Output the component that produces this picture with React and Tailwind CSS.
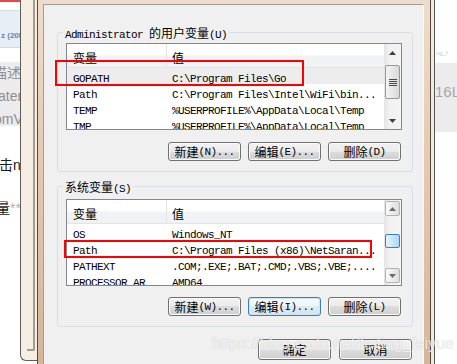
import React from "react";

const CJK = /([\u3400-\u9fff]+)/;

// ASCII runs in a narrow mono face (6px advance), CJK runs at 12px
function Txt({ children }) {
  const parts = String(children).split(CJK);
  return parts.map((p, i) => {
    if (p === "") return null;
    if (CJK.test(p)) {
      return (
        <span key={i} className="font-['Noto_Sans_CJK_SC',sans-serif] text-[12px]">
          {p}
        </span>
      );
    }
    return (
      <span key={i} className="font-['Liberation_Mono',monospace] text-[11px] tracking-[-0.6px] whitespace-pre">
        {p}
      </span>
    );
  });
}

function Arrow({ down, color = "#3f3f3f" }) {
  return (
    <svg width="7" height="4" viewBox="0 0 7 4">
      <polygon points={down ? "0,0 7,0 3.5,4" : "0,4 7,4 3.5,0"} fill={color} />
    </svg>
  );
}

function ScrollBar({ hot }) {
  return (
    <div className="w-[17px] flex flex-col bg-[linear-gradient(90deg,#e4e4e4,#f2f2f2_35%,#f4f4f4)]">
      {hot ? (
        <div className="h-[17px] pt-[1px] px-[1px]">
          <div className="h-[15px] rounded-[2px] border border-[#b2b2b2] bg-[linear-gradient(90deg,#fafafa,#dedede)] flex items-center justify-center">
            <Arrow color="#6a6a6a" />
          </div>
        </div>
      ) : (
        <div className="h-[17px] flex items-center justify-center">
          <Arrow />
        </div>
      )}
      <div className="flex-1 px-[1px]">
        {hot ? (
          <div className="mt-[17px] h-[14px] rounded-[2px] border border-[#3c7fb1] bg-[linear-gradient(90deg,#e6f5fd,#a8d9f4)]" />
        ) : (
          <div className="mt-[4px] h-[34px] rounded-[2px] border border-[#979797] bg-[linear-gradient(90deg,#f4f4f4,#d9d9d9)] flex flex-col items-center justify-center gap-[1px]">
            <div className="w-[8px] h-[1px] bg-[#4a4a4a]" />
            <div className="w-[8px] h-[1px] bg-[#4a4a4a]" />
            <div className="w-[8px] h-[1px] bg-[#4a4a4a]" />
            <div className="w-[8px] h-[1px] bg-[#4a4a4a]" />
          </div>
        )}
      </div>
      {hot ? (
        <div className="h-[17px] pb-[1px] px-[1px]">
          <div className="h-[15px] rounded-[2px] border border-[#b2b2b2] bg-[linear-gradient(90deg,#fafafa,#dedede)] flex items-center justify-center">
            <Arrow down color="#6a6a6a" />
          </div>
        </div>
      ) : (
        <div className="h-[17px] flex items-center justify-center">
          <Arrow down />
        </div>
      )}
    </div>
  );
}

function ListView({ rows, selected, hot }) {
  return (
    <div className="flex h-[87px] border border-[#828790] bg-white">
      <div className="flex-1 flex flex-col overflow-hidden">
        <div className="flex h-[24px] shrink-0 border-b border-[#e3e4e6] bg-[linear-gradient(#ffffff,#ffffff_45%,#f1f2f4_55%,#f1f2f4)] leading-[16px]">
          <div className="w-[100px] pl-[6px] pt-[5px] border-r border-[#e3e4e6]">
            <Txt>变量</Txt>
          </div>
          <div className="flex-1 pl-[5px] pt-[5px]">
            <Txt>值</Txt>
          </div>
        </div>
        {rows.map(([k, v], i) => (
          <div
            key={k + i}
            className={`flex h-[16px] shrink-0 items-center whitespace-nowrap ${i === selected ? "bg-[#ededed]" : ""}`}
          >
            <div className="w-[100px] pl-[6px] overflow-hidden">
              <Txt>{k}</Txt>
            </div>
            <div className="flex-1 pl-[5px] overflow-hidden">
              <Txt>{v}</Txt>
            </div>
          </div>
        ))}
      </div>
      <ScrollBar hot={hot} />
    </div>
  );
}

function Btn({ children, focus, tall }) {
  return (
    <div
      className={`w-[73px] ${tall ? "h-[21px]" : "h-[19px]"} rounded-[3px] border flex items-center justify-center leading-[14px] ${
        focus
          ? "border-[#3c7fb1] bg-[linear-gradient(#f5fafd,#eef5fa_50%,#dfebf4_50%,#d3e3ef)] shadow-[inset_0_0_0_1px_#c9e6f8]"
          : "border-[#707070] bg-[linear-gradient(#f2f2f2,#ebebeb_50%,#dddddd_50%,#cfcfcf)] shadow-[inset_0_0_0_1px_#fbfbfb]"
      }`}
    >
      <Txt>{children}</Txt>
    </div>
  );
}

function Group({ label, children, className }) {
  return (
    <fieldset className={`border border-[#d5dfe5] rounded-[3px] pl-[8px] pr-[10px] pb-[10px] ${className}`}>
      <legend className="ml-[-3px] px-[2px] leading-[14px] h-[14px]">
        <Txt>{label}</Txt>
      </legend>
      {children}
    </fieldset>
  );
}

const userVars = [
  ["GOPATH", "C:\\Program Files\\Go"],
  ["Path", "C:\\Program Files\\Intel\\WiFi\\bin..."],
  ["TEMP", "%USERPROFILE%\\AppData\\Local\\Temp"],
  ["TMP", "%USERPROFILE%\\AppData\\Local\\Temp"],
];

const sysVars = [
  ["OS", "Windows_NT"],
  ["Path", "C:\\Program Files (x86)\\NetSaran..."],
  ["PATHEXT", ".COM;.EXE;.BAT;.CMD;.VBS;.VBE;...."],
  ["PROCESSOR_AR", "AMD64"],
];

export default function App() {
  return (
    <div className="relative flex w-[457px] h-[364px] overflow-hidden bg-white text-black">
      {/* page behind, left sliver */}
      <div className="w-[20px] shrink-0 h-full flex flex-col overflow-hidden font-['Liberation_Sans','Noto_Sans_CJK_SC',sans-serif]">
        <div className="h-[2px] bg-[#e5474b]" />
        <div className="mt-[8px] h-[38px] bg-[#e7eef5] border-y border-[#d2dbe3] pt-[21px] pl-[1px] text-[8px] font-bold text-[#5a86b8] whitespace-nowrap leading-none">
          z (20M
        </div>
        <div className="mt-[14px] h-[64px] bg-[#ececec] text-[#8f8f8f] text-[14px] leading-[23px] whitespace-nowrap">
          <div className="ml-[-7px]">描述</div>
          <div className="ml-[-2px]">ater</div>
          <div className="ml-[-6px]">omV</div>
        </div>
        <div className="mt-[29px] ml-[-1px] text-[14px] leading-[20px] whitespace-nowrap text-[#1a1a1a]">击n</div>
        <div className="mt-[23px] ml-[-4px] text-[14px] leading-[20px] whitespace-nowrap text-[#1a1a1a]">
          量<span className="text-[#b0b0b0]">**</span>
        </div>
      </div>

      {/* frame of the window behind */}
      <div className="w-[17px] shrink-0 h-[361px] border-l border-b border-[#5e5e5e] rounded-bl-[6px] bg-[#f7eee3] flex justify-end pr-[2px]">
        <div className="w-[8px] h-[351px] border-r-2 border-b-2 border-[#a39c95] rounded-br-[2px]" />
      </div>

      {/* environment variables dialog */}
      <div className="w-[394px] shrink-0 h-full border-x border-[#51483f] bg-[linear-gradient(#f0dccb,#e4c7ad_50%,#d6b598)] pt-[4px] pl-[5px] pr-[6px]">
        <div className="relative h-[400px] flex flex-col border-l border-t border-[#9e9e9e] border-r border-r-[#fbfbfb] bg-[#f0f0f0] pl-[13px] pr-[10px] pt-[20px]">
          <Group label="Administrator 的用户变量(U)" className="pt-[4px]">
            <ListView rows={userVars} selected={0} />
            <div className="mt-[12px] pr-[1px] flex justify-end gap-[7px]">
              <Btn>新建(N)...</Btn>
              <Btn>编辑(E)...</Btn>
              <Btn>删除(D)</Btn>
            </div>
          </Group>

          <Group label="系统变量(S)" className="mt-[7px] pt-[6px]">
            <ListView rows={sysVars} hot />
            <div className="mt-[11px] pr-[1px] flex justify-end gap-[7px]">
              <Btn>新建(W)...</Btn>
              <Btn focus>编辑(I)...</Btn>
              <Btn>删除(L)</Btn>
            </div>
          </Group>

          <div className="mt-[12px] pr-[1px] flex justify-end gap-[8px]">
            <Btn tall>确定</Btn>
            <Btn tall>取消</Btn>
          </div>

          {/* red highlight boxes */}
          <div className="absolute left-[11px] top-[55px] w-[249px] h-[26px] border-2 border-[#ff0000]" />
          <div className="absolute left-[20px] top-[235px] w-[308px] h-[18px] border-2 border-[#ff0000]" />
        </div>
      </div>

      {/* frame edge on the right */}
      <div className="w-[4px] shrink-0 h-full bg-[#f3e9df] border-r border-[#555555]" />

      {/* page behind, right sliver */}
      <div className="flex-1 h-full overflow-hidden font-['Liberation_Sans',sans-serif]">
        <div className="mt-[50px] h-[8px] pl-[1px] text-[6px] text-[#c8c8c8] leading-none whitespace-nowrap">ng_f</div>
        <div className="mt-[5px] h-[69px] bg-[#ececec] pt-[21px] text-[15px] text-[#a6a6a6] leading-none whitespace-nowrap">16L</div>
      </div>

      {/* watermark */}
      <div className="absolute left-[212px] top-[334px] text-[16px] leading-[20px] whitespace-nowrap font-['Liberation_Sans',sans-serif] text-white/80 [text-shadow:0_0_1px_rgba(0,0,0,0.25)]">
        https://blog.csdn.net/feiting_feiyue
      </div>
    </div>
  );
}
